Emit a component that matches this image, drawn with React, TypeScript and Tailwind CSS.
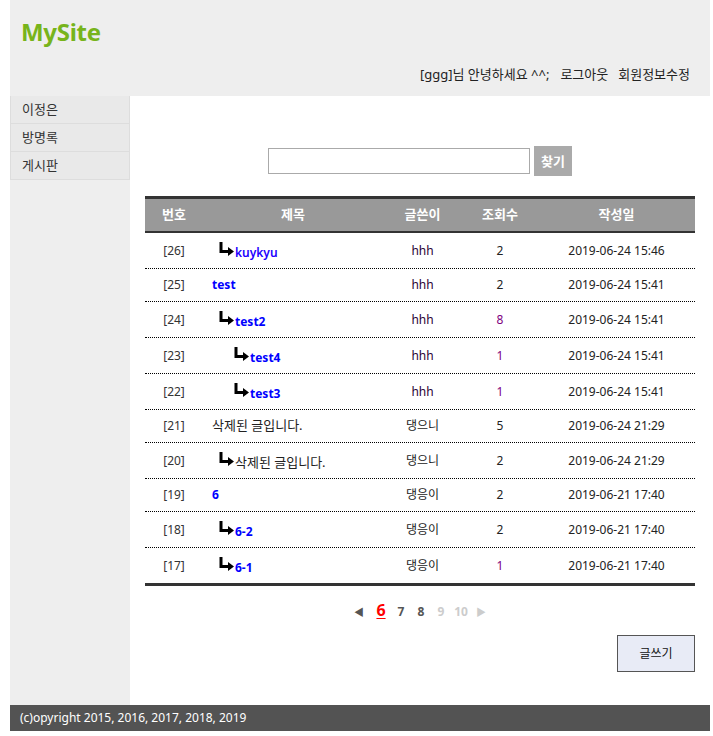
import React from "react";

type Row = {
  no: number;
  title: string;
  depth: number;
  link: boolean;
  bold: boolean;
  writer: string;
  hit: number;
  visited: boolean;
  date: string;
};

const rows: Row[] = [
  { no: 26, title: "kuykyu", depth: 1, link: true, bold: false, writer: "hhh", hit: 2, visited: false, date: "2019-06-24 15:46" },
  { no: 25, title: "test", depth: 0, link: true, bold: true, writer: "hhh", hit: 2, visited: false, date: "2019-06-24 15:41" },
  { no: 24, title: "test2", depth: 1, link: true, bold: true, writer: "hhh", hit: 8, visited: true, date: "2019-06-24 15:41" },
  { no: 23, title: "test4", depth: 2, link: true, bold: true, writer: "hhh", hit: 1, visited: true, date: "2019-06-24 15:41" },
  { no: 22, title: "test3", depth: 2, link: true, bold: true, writer: "hhh", hit: 1, visited: true, date: "2019-06-24 15:41" },
  { no: 21, title: "삭제된 글입니다.", depth: 0, link: false, bold: false, writer: "댕으니", hit: 5, visited: false, date: "2019-06-24 21:29" },
  { no: 20, title: "삭제된 글입니다.", depth: 1, link: false, bold: false, writer: "댕으니", hit: 2, visited: false, date: "2019-06-24 21:29" },
  { no: 19, title: "6", depth: 0, link: true, bold: true, writer: "댕응이", hit: 2, visited: false, date: "2019-06-21 17:40" },
  { no: 18, title: "6-2", depth: 1, link: true, bold: true, writer: "댕응이", hit: 2, visited: false, date: "2019-06-21 17:40" },
  { no: 17, title: "6-1", depth: 1, link: true, bold: true, writer: "댕응이", hit: 1, visited: true, date: "2019-06-21 17:40" },
];

function ReplyArrow() {
  return (
    <svg width="17" height="16" viewBox="0 0 17 16" className="shrink-0 -translate-y-[2px]">
      <path d="M3 1 V10.5 H10.5" fill="none" stroke="#000" strokeWidth="3" strokeLinejoin="miter" />
      <path d="M10 6 L16 10.5 L10 15 Z" fill="#000" />
    </svg>
  );
}

export default function App() {
  const font = { fontFamily: '"Noto Sans", "Noto Sans CJK KR", sans-serif' };
  return (
    <div className="bg-white min-h-[736px] text-[12px] text-[#333]" style={font}>
      <div className="ml-[10px] w-[700px]">
        {/* header */}
        <div className="h-[96px] bg-[#eeeeee] flex flex-col">
          <div className="pl-[11px] pt-[16px] h-[60px]">
            <span className="text-[24px] font-bold text-[#77b41b] leading-[32px] tracking-[-0.3px]">MySite</span>
          </div>
          <div className="flex justify-end items-center pr-[20px] text-[13px] text-[#222] leading-[20px] mt-[4px]">
            <span>[ggg]님 안녕하세요 ^^;</span>
            <span className="ml-[11px]">로그아웃</span>
            <span className="ml-[10px]">회원정보수정</span>
          </div>
        </div>

        {/* body */}
        <div className="flex h-[609px]">
          <div className="w-[120px] bg-[#eeeeee] shrink-0">
            {["이정은", "방명록", "게시판"].map((m) => (
              <div
                key={m}
                className="h-[28px] border-b border-x border-[#dddddd] bg-[#e9e9e9] pl-[11px] flex items-center text-[13px] text-[#333]"
              >
                {m}
              </div>
            ))}
          </div>

          <div className="flex-1 bg-white px-[15px] pt-[50px]">
            {/* search */}
            <div className="flex justify-center items-center gap-[4px]">
              <input className="w-[262px] h-[26px] border border-[#aaaaaa] outline-none" />
              <button className="w-[38px] h-[30px] bg-[#aaaaaa] text-white font-bold text-[13px] leading-[30px]">
                찾기
              </button>
            </div>

            {/* table */}
            <div className="mt-[20px] w-[550px]">
              <div className="border-t-[3px] border-b-[2px] border-[#333] bg-[#999999] h-[37px] flex items-center text-white font-bold text-[13px]">
                <div className="w-[58px] text-center">번호</div>
                <div className="w-[180px] text-center">제목</div>
                <div className="w-[79px] text-center">글쓴이</div>
                <div className="w-[76px] text-center">조회수</div>
                <div className="w-[157px] text-center">작성일</div>
              </div>
              {rows.map((r, i) => (
                <div
                  key={r.no}
                  className={`flex items-center ${
                    i === 0 ? "h-[36px]" : i === rows.length - 1 ? "h-[38px]" : r.depth > 0 ? "h-[36px]" : "h-[33px]"
                  } ${
                    i === rows.length - 1 ? "border-b-[3px] border-solid border-[#333]" : "border-b border-dotted border-black"
                  }`}
                >
                  <div className="w-[58px] text-center text-[#333]">[{r.no}]</div>
                  <div className="w-[180px] pl-[9px] flex items-center">
                    {r.depth > 0 && (
                      <div className={`flex ${r.depth === 2 ? "ml-[21px]" : "ml-[6px]"}`}>
                        <ReplyArrow />
                      </div>
                    )}
                    <span
                      className={`${r.depth > 0 ? "translate-y-[1.5px]" : ""} ${
                        r.link
                          ? r.bold
                            ? "text-[#0000ff] font-bold"
                            : "text-[#2200ff] font-semibold"
                          : "text-[#222] text-[13px]"
                      }`}
                    >
                      {r.title}
                    </span>
                  </div>
                  <div className={`w-[79px] text-center ${r.writer === "hhh" ? "text-[#2a0033]" : "text-[#222]"}`}>
                    {r.writer}
                  </div>
                  <div className={`w-[76px] text-center ${r.visited ? "text-[#800080]" : "text-[#222]"}`}>{r.hit}</div>
                  <div className="w-[157px] text-center text-[#222]">{r.date}</div>
                </div>
              ))}
            </div>

            {/* pagination */}
            <div className="w-[550px] flex justify-center items-center mt-[14px] h-[24px] font-bold text-[12px]">
              <span className="w-[20px] mr-[2px] text-center text-[#555] text-[10px]">◀</span>
              <span className="w-[20px] text-center text-[#ff0000] text-[16px] underline underline-offset-[2px] leading-[20px] -translate-y-[2px]">
                6
              </span>
              <span className="w-[20px] text-center text-[#555]">7</span>
              <span className="w-[20px] text-center text-[#555]">8</span>
              <span className="w-[20px] text-center text-[#cccccc]">9</span>
              <span className="w-[20px] text-center text-[#cccccc]">10</span>
              <span className="w-[20px] text-center text-[#cccccc] text-[10px]">▶</span>
            </div>

            {/* write button */}
            <div className="w-[550px] flex justify-end mt-[11px]">
              <button className="w-[78px] h-[37px] bg-[#e8ebf6] border border-[#555] text-[12px] text-[#111]">
                글쓰기
              </button>
            </div>
          </div>
        </div>

        {/* footer */}
        <div className="h-[26px] bg-[#535353] text-white text-[12px] pl-[10px] flex items-center">
          (c)opyright 2015, 2016, 2017, 2018, 2019
        </div>
      </div>
    </div>
  );
}
